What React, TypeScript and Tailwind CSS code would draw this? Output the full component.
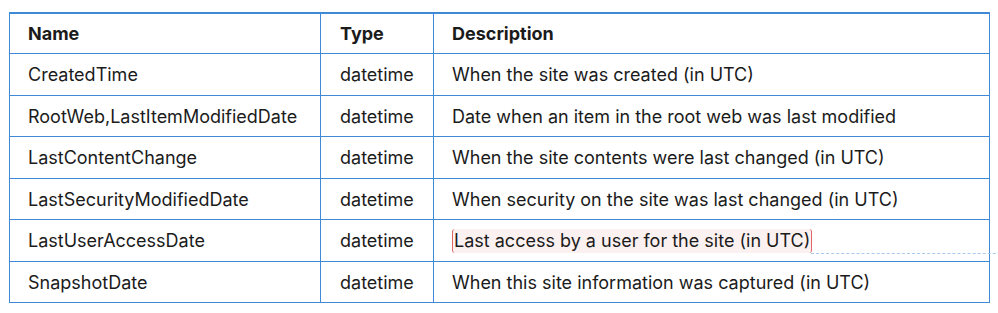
import React from "react";

const rows: [string, string, string][] = [
  ["CreatedTime", "datetime", "When the site was created (in UTC)"],
  ["RootWeb,LastItemModifiedDate", "datetime", "Date when an item in the root web was last modified"],
  ["LastContentChange", "datetime", "When the site contents were last changed (in UTC)"],
  ["LastSecurityModifiedDate", "datetime", "When security on the site was last changed (in UTC)"],
  ["LastUserAccessDate", "datetime", "Last access by a user for the site (in UTC)"],
  ["SnapshotDate", "datetime", "When this site information was captured (in UTC)"],
];

const heights = ["h-[42px]", "h-[41px]", "h-[42px]", "h-[41px]", "h-[42px]", "h-[41px]"];

export default function App() {
  return (
    <div
      className="w-[998px] h-[313px] overflow-hidden bg-white pt-[12px] pl-[9px] text-[18px] text-[#1b1b1b]"
      style={{ fontFamily: "Inter, 'Open Sans', sans-serif" }}
    >
      <div className="w-[981px] border-t-2 border-l-[1.5px] border-[#3f8ad6]">
        <div className="flex h-[40px] font-bold">
          <div className="w-[311px] flex items-center pl-[18px] border-r-[1.5px] border-b-[1.5px] border-[#3f8ad6]">Name</div>
          <div className="w-[113px] flex items-center pl-[19px] border-r-[1.5px] border-b-[1.5px] border-[#3f8ad6]">Type</div>
          <div className="flex-1 flex items-center pl-[18px] border-r-[1.5px] border-b-[1.5px] border-[#3f8ad6]">Description</div>
        </div>
        {rows.map((r, i) => (
          <div key={r[0]} className={`flex ${heights[i]}`}>
            <div className="w-[311px] flex items-center pl-[18px] border-r-[1.5px] border-b-[1.5px] border-[#3f8ad6]">{r[0]}</div>
            <div className="w-[113px] flex items-center pl-[19px] border-r-[1.5px] border-b-[1.5px] border-[#3f8ad6]">{r[1]}</div>
            <div className="flex-1 flex items-center pl-[18px] border-r-[1.5px] border-b-[1.5px] border-[#3f8ad6]">
              {i === 4 ? (
                <span className="relative inline-block bg-[#fcf1f1] border-l border-r border-[#e06666] rounded-[3px] leading-[24px] pl-px pr-px">
                  {r[2]}
                  <span className="absolute left-full bottom-[-1px] w-[200px] border-b border-dashed border-[#a9c9ee]" />
                </span>
              ) : (
                r[2]
              )}
            </div>
          </div>
        ))}
      </div>
    </div>
  );
}
